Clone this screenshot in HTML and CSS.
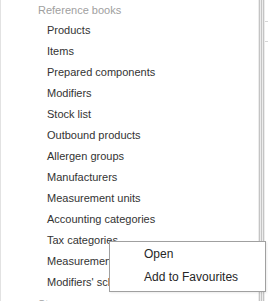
FILE: index.html
```html
<!DOCTYPE html>
<html lang="en">

<head>
    <meta charset="UTF-8">
    <title>Reference books</title>
    <link rel="stylesheet" href="styles.css">
</head>

<body>
    <div class="workspace">
        <div class="tree-panel">
            <div class="group-title">Reference books</div>
            <ul class="tree-items">
                <li>Products</li>
                <li>Items</li>
                <li>Prepared components</li>
                <li>Modifiers</li>
                <li>Stock list</li>
                <li>Outbound products</li>
                <li>Allergen groups</li>
                <li>Manufacturers</li>
                <li>Measurement units</li>
                <li>Accounting categories</li>
                <li>Tax categories</li>
                <li>Measurement scales</li>
                <li>Modifiers' schemes</li>
            </ul>
            <div class="group-title">Store</div>
        </div>
        <div class="splitter"></div>
        <div class="grid-panel">
            <div class="grid-row"></div>
            <div class="grid-row"></div>
        </div>
    </div>

    <div class="context-menu">
        <div class="menu-item">Open</div>
        <div class="menu-item">Add to Favourites</div>
    </div>
</body>

</html>
```

FILE: styles.css
```css
/* Reset */
* {
    margin: 0;
    padding: 0;
    box-sizing: border-box;
}

body {
    font-family: 'Liberation Sans', Arial, sans-serif;
    font-size: 11px;
    color: #333333;
    background: #ffffff;
    overflow: hidden;
}

.workspace {
    display: flex;
    height: 301px;
}

/* Navigation tree */
.tree-panel {
    width: 258px;
    border-left: 1px solid #e2e2e2;
    overflow: hidden;
}

.group-title {
    color: #a0a0a0;
    padding-left: 37px;
    line-height: 20px;
}

.tree-items {
    list-style: none;
}

.tree-items li {
    padding-left: 46px;
    line-height: 21px;
    white-space: nowrap;
}

.tree-items + .group-title {
    line-height: 21px;
    padding-top: 1px;
}

/* Splitter */
.splitter {
    width: 7px;
    background: repeating-linear-gradient(90deg, #ececec 0, #ececec 1px, #c4c4c4 1px, #c4c4c4 2px);
}

/* Right grid */
.grid-panel {
    flex: 1;
    background: #ffffff;
}

.grid-row {
    height: 20px;
    border-bottom: 1px solid #d6d6d6;
}

.grid-row:first-child {
    height: 22px;
}

/* Context menu */
.context-menu {
    position: absolute;
    left: 109px;
    top: 241px;
    width: 157px;
    background: #ffffff;
    border: 1px solid #a0a0a0;
    padding: 1px 0 2px;
    font-size: 12px;
    box-shadow: 1px 1px 2px rgba(0, 0, 0, 0.08);
}

.menu-item {
    padding-left: 34px;
    line-height: 23px;
    color: #262626;
}
```
